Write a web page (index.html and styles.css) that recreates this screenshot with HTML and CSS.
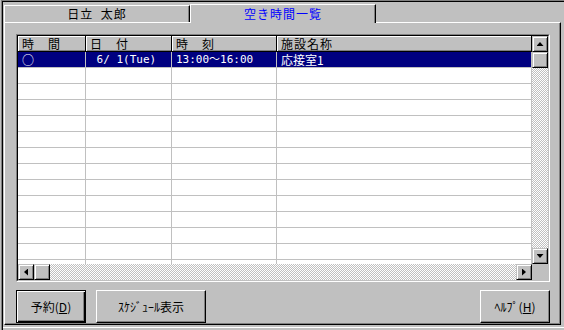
FILE: index.html
```html
<!DOCTYPE html>
<html>
<head>
<meta charset="utf-8">
<title>空き時間一覧</title>
<link rel="stylesheet" href="styles.css">
</head>
<body>
<div class="dlg">
  <div class="frame">
    <div class="tabs">
      <div class="tab">日立  太郎</div>
      <div class="tab on">空き時間一覧</div>
    </div>
    <div class="panel">
      <div class="list">
        <div class="listIn">
          <div class="table">
            <div class="row head">
              <div class="hd">時　間</div>
              <div class="hd">日　付</div>
              <div class="hd">時　刻</div>
              <div class="hd">施設名称</div>
            </div>
            <div class="rows">
              <div class="row sel">
                <div class="cell">○</div>
                <div class="cell num"> 6/ 1(Tue)</div>
                <div class="cell num">13:00～16:00</div>
                <div class="cell">応接室1</div>
              </div>
              <div class="row"><div class="cell"></div><div class="cell"></div><div class="cell"></div><div class="cell"></div></div>
              <div class="row"><div class="cell"></div><div class="cell"></div><div class="cell"></div><div class="cell"></div></div>
              <div class="row"><div class="cell"></div><div class="cell"></div><div class="cell"></div><div class="cell"></div></div>
              <div class="row"><div class="cell"></div><div class="cell"></div><div class="cell"></div><div class="cell"></div></div>
              <div class="row"><div class="cell"></div><div class="cell"></div><div class="cell"></div><div class="cell"></div></div>
              <div class="row"><div class="cell"></div><div class="cell"></div><div class="cell"></div><div class="cell"></div></div>
              <div class="row"><div class="cell"></div><div class="cell"></div><div class="cell"></div><div class="cell"></div></div>
              <div class="row"><div class="cell"></div><div class="cell"></div><div class="cell"></div><div class="cell"></div></div>
              <div class="row"><div class="cell"></div><div class="cell"></div><div class="cell"></div><div class="cell"></div></div>
              <div class="row"><div class="cell"></div><div class="cell"></div><div class="cell"></div><div class="cell"></div></div>
              <div class="row"><div class="cell"></div><div class="cell"></div><div class="cell"></div><div class="cell"></div></div>
              <div class="row"><div class="cell"></div><div class="cell"></div><div class="cell"></div><div class="cell"></div></div>
              <div class="row"><div class="cell"></div><div class="cell"></div><div class="cell"></div><div class="cell"></div></div>
            </div>
          </div>
          <div class="vsb">
            <div class="sb"><span class="ar up"></span></div>
            <div class="sb"></div>
            <div class="track"></div>
            <div class="sb"><span class="ar down"></span></div>
          </div>
          <div class="hsb">
            <div class="sb"><span class="ar left"></span></div>
            <div class="sb"></div>
            <div class="track"></div>
            <div class="sb"><span class="ar right"></span></div>
          </div>
          <div class="corner"></div>
        </div>
      </div>
      <div class="btns">
        <button type="button" class="btn def b1">予約(<u>D</u>)</button>
        <button type="button" class="btn b2">ｽｹｼﾞｭｰﾙ表示</button>
        <button type="button" class="btn b3">ﾍﾙﾌﾟ(<u>H</u>)</button>
      </div>
    </div>
    <div class="below"></div>
  </div>
</div>
</body>
</html>
```

FILE: styles.css
```css
body{
	margin: 0;
	background: #c0c0c0;
	font: 12px "Noto Sans CJK JP", sans-serif;
	color: #000;
	overflow: hidden;
}
.dlg{
	width: 563px;
	height: 330px;
	margin-left: 1px;
	border-top: 1px solid #808080;
	border-left: 1px solid #808080;
	box-sizing: border-box;
	overflow: hidden;
}
.frame{
	height: 100%;
	border-top: 1px solid #000;
	border-left: 1px solid #000;
	box-sizing: border-box;
}

/* tabs */
.tabs{
	display: flex;
	align-items: flex-end;
	height: 20px;
	padding-left: 1px;
}
.tab{
	width: 186px;
	height: 17px;
	box-sizing: border-box;
	border-top: 1px solid #fff;
	border-left: 1px solid #fff;
	border-right: 1px solid #000;
	box-shadow: inset -1px 0 #808080;
	text-align: center;
	line-height: 15px;
	letter-spacing: 1px;
	white-space: pre;
}
.tab.on{
	height: 19px;
	margin-bottom: -1px;
	position: relative;
	background: #c0c0c0;
	color: #0000ff;
	line-height: 17px;
}

/* panel */
.panel{
	width: 557px;
	height: 303px;
	margin-left: 1px;
	box-sizing: border-box;
	border: 1px solid;
	border-color: #fff #000 #000 #fff;
	box-shadow: inset -1px -1px #808080;
	padding: 11px 10px 0 11px;
}
.list{
	width: 534px;
	height: 248px;
	box-sizing: border-box;
	border: 1px solid;
	border-color: #808080 #fff #fff #808080;
}
.listIn{
	height: 100%;
	box-sizing: border-box;
	border: 1px solid;
	border-color: #000 #c0c0c0 #c0c0c0 #000;
	display: grid;
	grid-template-columns: 514px 16px;
	grid-template-rows: 228px 16px;
}
.table{
	display: flex;
	flex-direction: column;
	background: #fff;
	overflow: hidden;
}
.rows{
	height: 212px;
	overflow: hidden;
}
.row{
	display: grid;
	grid-template-columns: 68px 86px 105px 255px;
	height: 16px;
	flex: none;
}
.hd{
	box-sizing: border-box;
	background: #c0c0c0;
	border-right: 1px solid #000;
	border-bottom: 1px solid #000;
	box-shadow: inset 1px 1px #fff, inset 0 -1px #808080;
	line-height: 15px;
	padding-left: 4px;
	letter-spacing: 1px;
	white-space: nowrap;
}
.cell{
	box-sizing: border-box;
	border-right: 1px solid #c0c0c0;
	border-bottom: 1px solid #c0c0c0;
	line-height: 15px;
	padding-left: 4px;
	white-space: pre;
	overflow: hidden;
}
.cell.num{
	font-family: "DejaVu Sans Mono", "Noto Sans CJK JP", monospace;
	font-size: 11px;
}
.sel{
	background: #000080;
	color: #fff;
}

/* scrollbars */
.vsb{
	display: flex;
	flex-direction: column;
}
.hsb{
	display: flex;
}
.sb{
	width: 16px;
	height: 16px;
	flex: none;
	box-sizing: border-box;
	background: #c0c0c0;
	border: 1px solid;
	border-color: #c0c0c0 #000 #000 #c0c0c0;
	box-shadow: inset 1px 1px #fff, inset -1px -1px #808080;
	display: flex;
	align-items: center;
	justify-content: center;
}
.track{
	flex: 1;
	background: repeating-conic-gradient(#c0c0c0 0 25%, #fff 0 50%) 0 0 / 2px 2px;
}
.corner{
	background: #c0c0c0;
}
.ar{
	display: block;
	background: #000;
}
.up{
	width: 7px;
	height: 4px;
	clip-path: polygon(50% 0, 100% 100%, 0 100%);
}
.down{
	width: 7px;
	height: 4px;
	clip-path: polygon(0 0, 100% 0, 50% 100%);
}
.left{
	width: 4px;
	height: 7px;
	clip-path: polygon(100% 0, 100% 100%, 0 50%);
}
.right{
	width: 4px;
	height: 7px;
	clip-path: polygon(0 0, 100% 50%, 0 100%);
}

/* buttons */
.btns{
	display: flex;
	margin-top: 8px;
}
.btn{
	height: 33px;
	padding: 0;
	box-sizing: border-box;
	background: #c0c0c0;
	border: 1px solid;
	border-color: #fff #000 #000 #fff;
	box-shadow: inset -1px -1px #808080;
	font: inherit;
	color: #000;
}
.btn.def{
	border-color: #000;
	box-shadow: inset 1px 1px #fff, inset -1px -1px #000, inset -2px -2px #808080;
}
.b1{
	width: 70px;
}
.b2{
	width: 110px;
	margin-left: 10px;
}
.b3{
	width: 70px;
	margin-left: auto;
}
.below{
	margin-top: 2px;
	border-top: 1px solid #fff;
}
```
